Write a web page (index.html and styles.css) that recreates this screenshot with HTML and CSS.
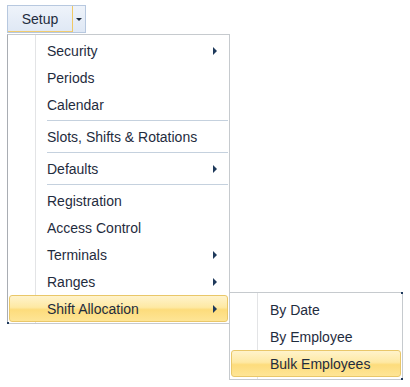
FILE: index.html
```html
<!DOCTYPE html>
<html>
<head>
<meta charset="utf-8">
<link rel="stylesheet" href="styles.css">
</head>
<body>
<div class="page">
  <div class="split">
    <div class="split-main">Setup</div>
    <div class="split-drop"><span class="down"></span></div>
  </div>
  <div class="menu-area">
    <div class="menu">
      <div class="item"><span class="label">Security</span><span class="arrow"></span></div>
      <div class="item"><span class="label">Periods</span></div>
      <div class="item"><span class="label">Calendar</span></div>
      <div class="sep"></div>
      <div class="item"><span class="label">Slots, Shifts &amp; Rotations</span></div>
      <div class="sep"></div>
      <div class="item"><span class="label">Defaults</span><span class="arrow"></span></div>
      <div class="sep"></div>
      <div class="item"><span class="label">Registration</span></div>
      <div class="item"><span class="label">Access Control</span></div>
      <div class="item"><span class="label">Terminals</span><span class="arrow"></span></div>
      <div class="item"><span class="label">Ranges</span><span class="arrow"></span></div>
      <div class="item active"><span class="label">Shift Allocation</span><span class="arrow"></span></div>
    </div>
    <div class="submenu">
      <div class="item"><span class="label">By Date</span></div>
      <div class="item"><span class="label">By Employee</span></div>
      <div class="item active"><span class="label">Bulk Employees</span></div>
    </div>
  </div>
</div>
</body>
</html>
```
FILE: styles.css
```css
html, body {
  margin: 0;
  padding: 0;
  background: #ffffff;
}
body {
  font-family: "Liberation Sans", Arial, sans-serif;
  font-size: 14px;
  color: #1f2c3e;
}
.page {
  box-sizing: border-box;
  min-height: 387px;
  padding: 5px 0 0 7px;
}
.split {
  display: flex;
  width: 79px;
  height: 28px;
  box-sizing: border-box;
  border: 1px solid #b7c8df;
  background: linear-gradient(#eef3fa, #dfe8f5);
}
.split-main {
  width: 64px;
  display: flex;
  align-items: center;
  justify-content: center;
  border-right: 1px solid #f0c864;
  box-shadow: inset 0 -1px 0 #f2cc6e;
}
.split-drop {
  flex: 1;
  display: flex;
  align-items: center;
  justify-content: center;
}
.down {
  width: 0;
  height: 0;
  border-left: 3px solid transparent;
  border-right: 3px solid transparent;
  border-top: 3px solid #1e2b3c;
}
.menu-area {
  position: relative;
  margin-top: 1px;
  padding-bottom: 60px;
}
.menu {
  position: relative;
  width: 223px;
  box-sizing: border-box;
  border: 1px solid #c6cace;
  border-left-color: #a9adb3;
  background: linear-gradient(to right, #ffffff 27px, #e3e4e6 27px, #e3e4e6 28px, #ffffff 28px);
  padding: 2px 0 1px;
}
.menu::after {
  content: "";
  position: absolute;
  left: -1px;
  bottom: -1px;
  width: 2px;
  height: 2px;
  background: #1e3a5e;
}
.item {
  height: 27px;
  box-sizing: border-box;
  display: flex;
  align-items: center;
  margin: 0 1px;
  padding: 0 10px 0 37px;
  border: 1px solid transparent;
  border-radius: 3px;
}
.label {
  flex: 1;
  white-space: nowrap;
}
.arrow {
  width: 0;
  height: 0;
  border-top: 4px solid transparent;
  border-bottom: 4px solid transparent;
  border-left: 4px solid #1e395b;
}
.item.active {
  background: linear-gradient(#fff3cb, #fee9a4 45%, #fddc7c 55%, #fee596);
  border-color: #e9c769;
}
.sep {
  height: 1px;
  margin: 2px 1px 2px 39px;
  background: #c5d1de;
}
.submenu {
  position: absolute;
  left: 222px;
  top: 258px;
  width: 174px;
  box-sizing: border-box;
  border: 1px solid #c6cace;
  background: linear-gradient(to right, #ffffff 27px, #e3e4e6 27px, #e3e4e6 28px, #ffffff 28px);
  padding: 3px 0 2px;
}
.submenu::before,
.submenu::after {
  content: "";
  position: absolute;
  right: -1px;
  width: 2px;
  height: 2px;
  background: #1e3a5e;
}
.submenu::before {
  top: -1px;
}
.submenu::after {
  bottom: -1px;
}
.submenu .item {
  padding-left: 38px;
}
```
